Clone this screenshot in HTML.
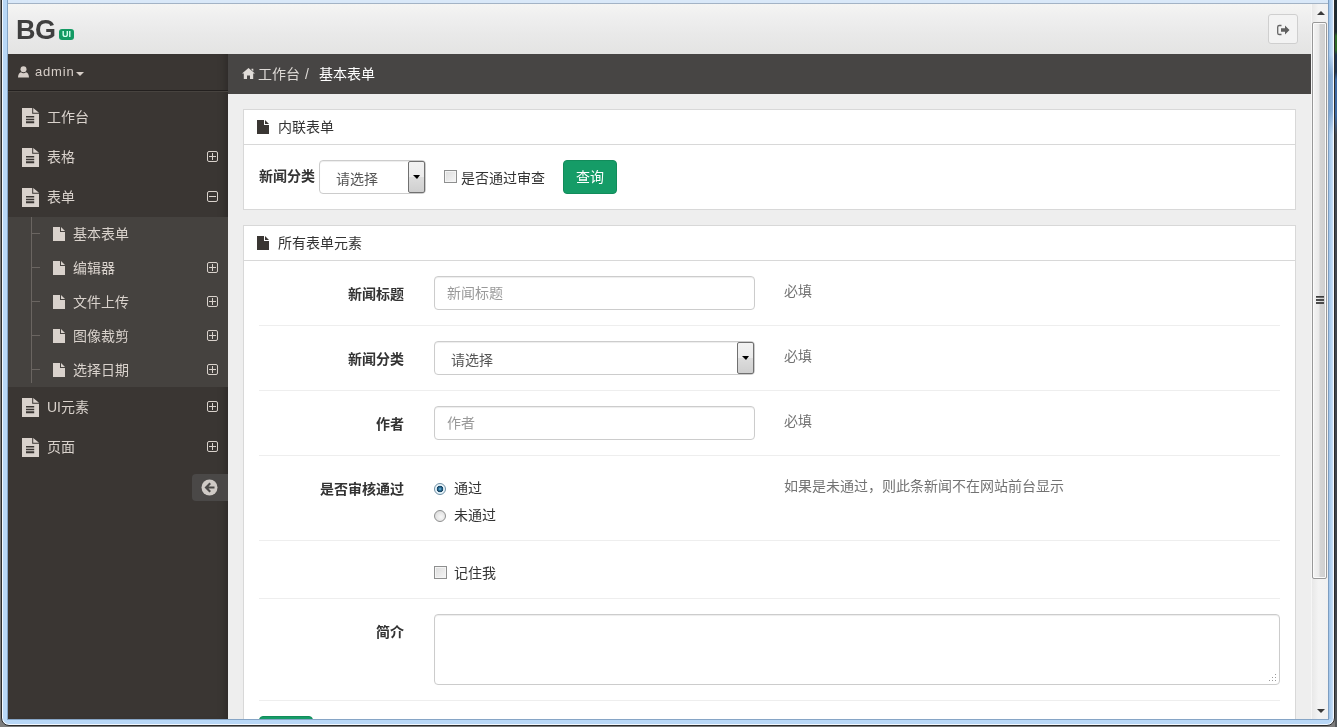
<!DOCTYPE html>
<html lang="zh-CN">
<head>
<meta charset="utf-8">
<title>基本表单</title>
<style>
*{box-sizing:border-box;margin:0;padding:0}
html,body{width:1337px;height:727px;overflow:hidden;background:#8a8a8a}
body{position:relative;font-family:"Liberation Sans","Noto Sans CJK SC",sans-serif;font-size:14px;color:#333}
.abs{position:absolute}
/* window chrome */
#chrome{position:absolute;left:0;top:0;width:1337px;height:727px;background:#7d7d7d;overflow:hidden}
#frame{position:absolute;left:1px;top:-10px;width:1334px;height:736px;background:#b9d8f7;border:1px solid #2c2c2c;border-radius:8px;box-shadow:inset 0 0 0 1px #f4f9ff}
#desk{position:absolute;left:1335px;top:0;width:2px;height:727px;background:linear-gradient(#1d2b33 0,#1d2b33 32px,#2f6a2a 36px,#2f6a2a 50px,#1f3550 55px,#1f3550 72px,#3c68a0 80px,#3c68a0 115px,#444a52 135px,#3d4249 600px,#55595c 727px)}
#topstrip{position:absolute;left:8px;top:0;width:1320px;height:3px;background:#d9e8f8}
#topline{position:absolute;left:8px;top:3px;width:1320px;height:1px;background:#a3b3c5}
#lline{position:absolute;left:7px;top:0;width:1px;height:720px;background:#86a5c6}
#rline{position:absolute;left:1328px;top:0;width:1px;height:720px;background:#7d9dc0}
#bline{position:absolute;left:7px;top:719px;width:1322px;height:1px;background:#86a5c6}
#rgrad{position:absolute;left:1329px;top:0;width:4px;height:719px;background:linear-gradient(180deg,rgba(60,110,170,0) 55px,rgba(60,110,170,.4) 75px,rgba(60,110,170,.4) 110px,rgba(60,110,170,0) 135px),linear-gradient(90deg,#9fc4ea,#c9dff6)}
#page{position:absolute;left:8px;top:4px;width:1303px;height:715px;background:#eeeeee;overflow:hidden;will-change:transform}
/* scrollbar */
#sb{position:absolute;left:1311px;top:4px;width:17px;height:715px;background:linear-gradient(90deg,#e8e8e8 0,#f3f3f3 40%,#f1f1f1 100%);border-left:1px solid #f6f6f6}
#sb .thumb{position:absolute;left:0;top:18px;width:15px;height:557px;border:1px solid #989898;border-radius:2px;background:linear-gradient(90deg,#f4f4f4 0,#eaeaea 45%,#d4d4d4 55%,#cfcfcf 100%);box-shadow:inset 0 0 0 1px #fbfbfb}
#sb .grip{position:absolute;left:4px;top:292px;width:8px;height:2px;background:linear-gradient(#3c3c3c 60%,#bdbdbd);box-shadow:0 3px 0 #4a4a4a,0 6px 0 #4a4a4a}
.tri-up{position:absolute;left:5px;top:7px;width:0;height:0;border-left:4px solid transparent;border-right:4px solid transparent;border-bottom:4px solid #3a3a3a}
.tri-dn{position:absolute;left:5px;top:705px;width:0;height:0;border-left:4px solid transparent;border-right:4px solid transparent;border-top:4px solid #3a3a3a}
/* header */
#hdr{position:absolute;left:0;top:0;width:1303px;height:50px;background:linear-gradient(#f5f5f3 0%,#efefef 25%,#e9e9e9 60%,#e4e4e3 100%)}
#logo{position:absolute;left:8px;top:10px;font-size:27px;font-weight:bold;letter-spacing:-.5px;color:#3f3f3f;line-height:32px}
#badge{position:absolute;left:51px;top:25px;width:15px;height:11px;background:#139a63;border-radius:3px;color:#d8fff0;font-size:9px;font-weight:bold;line-height:11px;text-align:center}
#logout{position:absolute;left:1260px;top:10px;width:30px;height:30px;border:1px solid #cfcfcf;border-radius:3px;background:#f3f3f3}
/* sidebar */
#side{position:absolute;left:0;top:50px;width:220px;height:665px;background:#3a3633;box-shadow:inset -8px 0 8px -6px rgba(0,0,0,.25)}
#user{position:absolute;left:0;top:0;width:220px;height:37px;border-bottom:1px solid #23201f;box-shadow:0 1px 0 #47433f;color:#d6cec8;font-size:13px;line-height:36px}
#user span{position:absolute;left:27px;top:0;letter-spacing:.8px}
.mi{position:absolute;left:0;width:220px;height:40px;color:#d9d2cc;font-size:14px;line-height:40px}
.mi .t{position:absolute;left:39px;top:0}
.mi svg.doc{position:absolute;left:14px;top:11px}
.pm{position:absolute;left:199px;width:11px;height:11px;border:1px solid #d9d2cc;border-radius:2px}
.pm:before{content:"";position:absolute;left:1px;top:4px;width:7px;height:1px;background:#d9d2cc}
.pm.plus:after{content:"";position:absolute;left:4px;top:1px;width:1px;height:7px;background:#d9d2cc}
#sub{position:absolute;left:0;top:165px;width:220px;height:172px;background:#45423f}
#sub .vl{position:absolute;left:23px;top:0;width:1px;height:166px;background:#6a6561}
.si{position:absolute;left:0;width:220px;height:34px;color:#d9d2cc;font-size:14px;line-height:34px}
.si .h{position:absolute;left:24px;top:16px;width:8px;height:1px;background:#6a6561}
.si .t{position:absolute;left:65px;top:0}
.si svg{position:absolute;left:45px;top:10px}
#collapse{position:absolute;left:184px;top:420px;width:36px;height:27px;background:#4a4847;border-radius:4px 0 0 4px}
/* main */
#crumb{position:absolute;left:220px;top:50px;width:1083px;height:40px;background:#474544;color:#fff;font-size:14px;line-height:40px}
.panel{position:absolute;left:235px;width:1053px;background:#fff;border:1px solid #d8d8d8}
.ph{position:absolute;left:0;top:0;width:1051px;height:35px;border-bottom:1px solid #d8d8d8;font-size:14px;line-height:35px;color:#333}
.ph span{position:absolute;left:34px;top:0}
.ph svg{position:absolute;left:13px;top:10px}
.lbl{position:absolute;font-weight:bold;font-size:14px;color:#333;white-space:nowrap}
.inp{position:absolute;height:34px;border:1px solid #ccc;border-radius:4px;background:#fff;box-shadow:inset 0 1px 1px rgba(0,0,0,.075);font-size:14px;line-height:32px;color:#999;padding-left:12px;white-space:nowrap}
.sel{color:#555;padding-left:16px;line-height:36px}
.sel .arr{position:absolute;right:0;top:0;width:17px;height:32px;border:1px solid #707070;border-radius:2px;background:linear-gradient(#f2f2f2,#ebebeb 50%,#dddddd 50%,#cfcfcf)}
.sel .arr:after{content:"";position:absolute;left:4px;top:13px;border-left:4px solid transparent;border-right:3px solid transparent;border-top:4px solid #000}
.help{position:absolute;font-size:14px;color:#737373;white-space:nowrap}
.hr{position:absolute;left:15px;width:1021px;height:1px;background:#eee}
.cb{position:absolute;width:13px;height:13px;border:1px solid #8e8f8f;background:linear-gradient(135deg,#dcdcdc,#f6f6f6);box-shadow:inset 0 0 0 1px #f4f4f4}
.rd{position:absolute;width:12px;height:12px;border:1px solid #8e8f8f;border-radius:50%;background:radial-gradient(circle at 60% 60%,#f8f8f8,#d4d4d4)}
.rd.on{background:radial-gradient(circle at 50% 50%,#7fc3e6 0,#2a6f99 1.5px,#173f5c 3px,#e6f4fb 3.6px,#f4fafd 100%);border-color:#6e8ea3}
.txt{position:absolute;font-size:14px;color:#333;white-space:nowrap}
.btn{position:absolute;background:#159c67;border:1px solid #128c5b;border-radius:4px;color:#fff;font-size:14px;text-align:center}
</style>
</head>
<body>
<div id="chrome"><div id="frame"></div><div id="desk"></div><div id="topstrip"></div><div id="topline"></div><div id="lline"></div><div id="rline"></div><div id="rgrad"></div><div id="bline"></div></div>
<div id="page">
  <div id="hdr">
    <div id="logo">BG</div>
    <div id="badge">UI</div>
    <div id="logout">
      <svg class="abs" style="left:-0.500px;top:1px" width="28" height="28" viewBox="0 0 28 28"><path d="M12.5 9.5h-2.2a1.6 1.6 0 0 0-1.6 1.6v5.8a1.6 1.6 0 0 0 1.6 1.6h2.2" fill="none" stroke="#666" stroke-width="1.300"/><path d="M12 12.300h4v-2.800l4.500 4.500-4.500 4.500v-2.800h-4z" fill="#606060"/></svg>
    </div>
  </div>
  <div id="side">
    <div id="user">
      <svg class="abs" style="left:10px;top:12px" width="11" height="12" viewBox="0 0 11 12"><circle cx="5.5" cy="3.2" r="3" fill="#d6cec8"/><path d="M0 11.5c0-3.2 1.5-5 3-5.3 0.8 0.7 1.6 1 2.5 1s1.7-0.3 2.5-1c1.5 0.3 3 2.100 3 5.300z" fill="#d6cec8"/></svg>
      <span>admin</span>
      <i class="abs" style="left:68px;top:18px;width:0;height:0;border-left:4px solid transparent;border-right:4px solid transparent;border-top:4px solid #d6cec8"></i>
    </div>
<div class="mi" style="top:43px"><svg class="doc" width="17" height="19" viewBox="0 0 17 19"><path d="M0 0h10.200v5.800h6.800v13.200h-17z M11.200 0l5.800 4.800h-5.800z" fill="#d9d2cc"/><path d="M4 7.900h8.200v1.600h-8.200z M4 10.700h8.200v1.600h-8.200z M4 13.300h8.200v2h-8.200z" fill="#3a3633"/></svg><span class="t">工作台</span></div>
<div class="mi" style="top:83px"><svg class="doc" width="17" height="19" viewBox="0 0 17 19"><path d="M0 0h10.200v5.800h6.800v13.200h-17z M11.200 0l5.800 4.800h-5.800z" fill="#d9d2cc"/><path d="M4 7.900h8.200v1.600h-8.200z M4 10.700h8.200v1.600h-8.200z M4 13.300h8.200v2h-8.200z" fill="#3a3633"/></svg><span class="t">表格</span><i class="pm plus" style="top:14px"></i></div>
<div class="mi" style="top:123px"><svg class="doc" width="17" height="19" viewBox="0 0 17 19"><path d="M0 0h10.200v5.800h6.800v13.200h-17z M11.200 0l5.800 4.800h-5.800z" fill="#d9d2cc"/><path d="M4 7.900h8.200v1.600h-8.200z M4 10.700h8.200v1.600h-8.200z M4 13.300h8.200v2h-8.200z" fill="#3a3633"/></svg><span class="t">表单</span><i class="pm minus" style="top:14px"></i></div>
<div class="mi" style="top:333px"><svg class="doc" width="17" height="19" viewBox="0 0 17 19"><path d="M0 0h10.200v5.800h6.800v13.200h-17z M11.200 0l5.800 4.800h-5.800z" fill="#d9d2cc"/><path d="M4 7.900h8.200v1.600h-8.200z M4 10.700h8.200v1.600h-8.200z M4 13.300h8.200v2h-8.200z" fill="#3a3633"/></svg><span class="t">UI元素</span><i class="pm plus" style="top:14px"></i></div>
<div class="mi" style="top:373px"><svg class="doc" width="17" height="19" viewBox="0 0 17 19"><path d="M0 0h10.200v5.800h6.800v13.200h-17z M11.200 0l5.800 4.800h-5.800z" fill="#d9d2cc"/><path d="M4 7.900h8.200v1.600h-8.200z M4 10.700h8.200v1.600h-8.200z M4 13.300h8.200v2h-8.200z" fill="#3a3633"/></svg><span class="t">页面</span><i class="pm plus" style="top:14px"></i></div>
<div id="sub" style="top:163px;height:170px"><div class="vl"></div>
<div class="si" style="top:0px"><i class="h"></i><svg width="12" height="14" viewBox="0 0 12 14"><path d="M0 0h7v5h5v9h-12z M8 0l4 4h-4z" fill="#d9d2cc"/></svg><span class="t">基本表单</span></div>
<div class="si" style="top:34px"><i class="h"></i><svg width="12" height="14" viewBox="0 0 12 14"><path d="M0 0h7v5h5v9h-12z M8 0l4 4h-4z" fill="#d9d2cc"/></svg><span class="t">编辑器</span><i class="pm plus" style="top:11px"></i></div>
<div class="si" style="top:68px"><i class="h"></i><svg width="12" height="14" viewBox="0 0 12 14"><path d="M0 0h7v5h5v9h-12z M8 0l4 4h-4z" fill="#d9d2cc"/></svg><span class="t">文件上传</span><i class="pm plus" style="top:11px"></i></div>
<div class="si" style="top:102px"><i class="h"></i><svg width="12" height="14" viewBox="0 0 12 14"><path d="M0 0h7v5h5v9h-12z M8 0l4 4h-4z" fill="#d9d2cc"/></svg><span class="t">图像裁剪</span><i class="pm plus" style="top:11px"></i></div>
<div class="si" style="top:136px"><i class="h"></i><svg width="12" height="14" viewBox="0 0 12 14"><path d="M0 0h7v5h5v9h-12z M8 0l4 4h-4z" fill="#d9d2cc"/></svg><span class="t">选择日期</span><i class="pm plus" style="top:11px"></i></div>
</div>
<div id="collapse"><svg class="abs" style="left:9px;top:5px" width="17" height="17" viewBox="0 0 17 17"><circle cx="8.5" cy="8.5" r="8" fill="#cfcac6"/><path d="M3.500 8.500l5-5 1.500 1.500-2.500 2.500h6v2h-6l2.500 2.500-1.500 1.500z" fill="#4a4847"/></svg></div>
  </div>
  <div id="crumb"><svg class="abs" style="left:14px;top:14px" width="13" height="11" viewBox="0 0 13 11"><path d="M6.500 0l6.500 5.500h-1.800v5.500h-3.200v-3.500h-3v3.500h-3.200v-5.500h-1.800z M9.500 0.800h1.800v2.500l-1.800-1.500z" fill="#e0dcd8"/></svg><span class="abs" style="left:30px;top:0;color:#dedad6">工作台</span><span class="abs" style="left:77px;top:0;color:#dedad6">/</span><span class="abs" style="left:91px;top:0;color:#fff">基本表单</span></div>
<div class="panel" style="top:105px;height:101px">
<div class="ph"><svg width="12" height="14" viewBox="0 0 12 14"><path d="M0 0h7v5h5v9h-12z M8 0l4 4h-4z" fill="#3a3633"/></svg><span>内联表单</span></div>
<div class="lbl" style="left:15px;top:55px">新闻分类</div>
<div class="inp sel" style="left:75px;top:50px;width:107px">请选择<i class="arr"></i></div>
<i class="cb" style="left:200px;top:60px"></i>
<div class="txt" style="left:217px;top:57px">是否通过审查</div>
<div class="btn" style="left:319px;top:50px;width:54px;height:34px;line-height:32px">查询</div>
</div>
<div class="panel" style="top:221px;height:520px">
<div class="ph"><svg width="12" height="14" viewBox="0 0 12 14"><path d="M0 0h7v5h5v9h-12z M8 0l4 4h-4z" fill="#3a3633"/></svg><span>所有表单元素</span></div>
<div class="lbl" style="right:891px;top:57px">新闻标题</div>
<div class="inp" style="left:190px;top:50px;width:321px">新闻标题</div>
<div class="help" style="left:540px;top:54px">必填</div>
<i class="hr" style="top:99px"></i>
<div class="lbl" style="right:891px;top:122px">新闻分类</div>
<div class="inp sel" style="left:190px;top:115px;width:321px">请选择<i class="arr"></i></div>
<div class="help" style="left:540px;top:119px">必填</div>
<i class="hr" style="top:164px"></i>
<div class="lbl" style="right:891px;top:187px">作者</div>
<div class="inp" style="left:190px;top:180px;width:321px">作者</div>
<div class="help" style="left:540px;top:184px">必填</div>
<i class="hr" style="top:229px"></i>
<div class="lbl" style="right:891px;top:252px">是否审核通过</div>
<i class="rd on" style="left:190px;top:257px"></i>
<div class="txt" style="left:210px;top:251px">通过</div>
<i class="rd" style="left:190px;top:284px"></i>
<div class="txt" style="left:210px;top:278px">未通过</div>
<div class="help" style="left:540px;top:249px">如果是未通过，则此条新闻不在网站前台显示</div>
<i class="hr" style="top:314px"></i>
<i class="cb" style="left:190px;top:340px"></i>
<div class="txt" style="left:210px;top:336px">记住我</div>
<i class="hr" style="top:372px"></i>
<div class="lbl" style="right:891px;top:395px">简介</div>
<div class="inp" style="left:190px;top:388px;width:846px;height:71px"><svg class="abs" style="right:1px;bottom:1px" width="10" height="10" viewBox="0 0 10 10"><g fill="#9a9a9a"><rect x="7" y="1" width="1" height="1"/><rect x="4" y="4" width="1" height="1"/><rect x="7" y="4" width="1" height="1"/><rect x="1" y="7" width="1" height="1"/><rect x="4" y="7" width="1" height="1"/><rect x="7" y="7" width="1" height="1"/></g></svg></div>
<i class="hr" style="top:474px"></i>
<div class="btn" style="left:15px;top:490px;width:54px;height:34px;line-height:32px">提交</div>
</div>

</div>
<div id="sb"><div class="tri-up"></div><div class="thumb"></div><div class="grip"></div><div class="tri-dn"></div></div>
</body>
</html>
